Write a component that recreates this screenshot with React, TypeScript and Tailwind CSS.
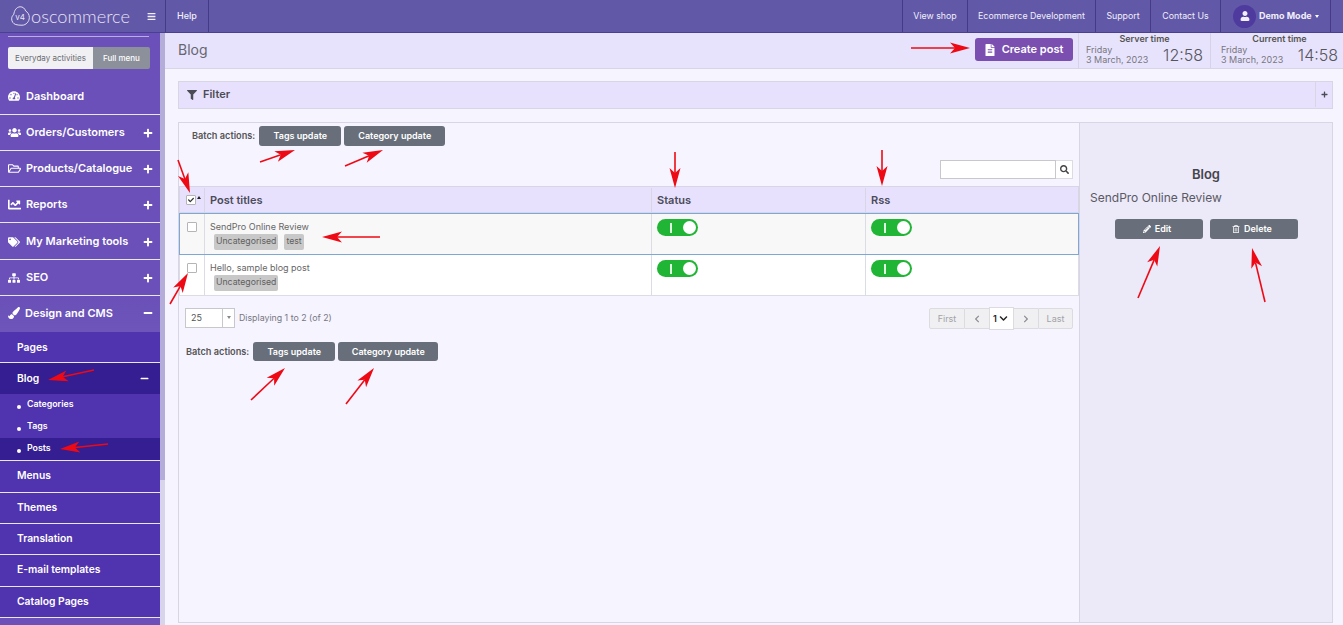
import React from 'react'
import {
  FaChevronDown,
  FaChevronLeft,
  FaChevronRight,
  FaFileAlt,
  FaFilter,
  FaPaintBrush,
  FaPencilAlt,
  FaPlus,
  FaRegFolderOpen,
  FaRegTrashAlt,
  FaSearch,
  FaSitemap,
  FaTachometerAlt,
  FaTags,
  FaUser,
  FaUsers,
  FaBars,
  FaMinus,
  FaCheck,
  FaChartLine,
} from 'react-icons/fa'

const arrows = [
  [911, 48, 970, 48],
  [260, 162, 295, 150],
  [345, 166, 383, 150],
  [178, 160, 190, 193],
  [675, 152, 675, 188],
  [882, 150, 882, 186],
  [380, 237, 322, 237],
  [170, 304, 188, 273],
  [1138, 298, 1160, 246],
  [1265, 302, 1252, 248],
  [251, 400, 285, 368],
  [346, 404, 374, 368],
  [94, 370, 48, 380],
  [108, 444, 60, 449],
]

function Arrows() {
  return (
    <svg className="absolute left-0 top-0 pointer-events-none" width="1343" height="625">
      {arrows.map(([x1, y1, x2, y2], i) => {
        const len = Math.hypot(x2 - x1, y2 - y1)
        const ux = (x2 - x1) / len
        const uy = (y2 - y1) / len
        const px = -uy
        const py = ux
        const bx = x2 - ux * 20
        const by = y2 - uy * 20
        const nx = x2 - ux * 15
        const ny = y2 - uy * 15
        const head = `${x2},${y2} ${bx + px * 5.5},${by + py * 5.5} ${nx},${ny} ${bx - px * 5.5},${by - py * 5.5}`
        return (
          <g key={i}>
            <line x1={x1} y1={y1} x2={nx} y2={ny} stroke="#ee0a14" strokeWidth="1.6" />
            <polygon points={head} fill="#ee0a14" />
          </g>
        )
      })}
    </svg>
  )
}

function Logo() {
  return (
    <div className="flex items-center w-[147px] pl-[11px] gap-[1px] shrink-0">
      <svg width="19" height="22" viewBox="0 0 20 23" fill="none" stroke="#e9e6f6" strokeWidth="1">
        <path d="M5 20.500c-2.600-.8-4.300-3.200-4.300-6 0-2.100.9-3.600 2.300-4.700C3.300 5.600 5.900 2 9.500 1.800c3-.2 5.100 1.900 5.900 4.400 2.400 1.400 3.900 3.900 3.900 6.800 0 4.300-3.400 8.200-7.700 8.200-2.300 0-4.500-.1-6.600-.7z" />
        <text x="4.500" y="16" fontSize="8.500" fill="#e9e6f6" stroke="none" fontFamily="Inter, sans-serif">v4</text>
      </svg>
      <span className="text-[18.200px] font-light leading-none text-[#e6e3f3] font-['Lato',sans-serif]">oscommerce</span>
    </div>
  )
}

function TopLink({ label, width }: { label: string; width: string }) {
  return (
    <div className={`${width} flex items-center justify-center border-l border-[#443a86] text-[8.8px] text-[#f1effa]`}>
      {label}
    </div>
  )
}

function TopBar() {
  return (
    <div className="h-[33px] flex bg-[#6258a8] border-b border-[#4a4092]">
      <Logo />
      <div className="w-[18px] flex items-center text-[#f1effa]">
        <FaBars size={9} />
      </div>
      <div className="w-[44px] flex items-center justify-center border-l border-r border-[#443a86] text-[9px] font-medium text-[#f1effa]">
        Help
      </div>
      <div className="flex-1" />
      <TopLink label="View shop" width="w-[65px]" />
      <TopLink label="Ecommerce Development" width="w-[128px]" />
      <TopLink label="Support" width="w-[55px]" />
      <TopLink label="Contact Us" width="w-[70px]" />
      <div className="w-[111px] flex items-center gap-[3px] pl-[12px] border-l border-r border-[#443a86] text-[9px] font-bold text-[#f1effa]">
        <div className="w-[23px] h-[23px] rounded-full bg-[#4f3a9e] flex items-center justify-center">
          <FaUser size={10} />
        </div>
        <span>Demo Mode</span>
        <span className="border-x-[2.500px] border-x-transparent border-t-[3px] border-t-white" />
      </div>
      <div className="w-[12px]" />
    </div>
  )
}

function MainItem({ icon, label, h, sign = 'plus' }: { icon: React.ReactNode; label: string; h: string; sign?: 'plus' | 'minus' | 'none' }) {
  return (
    <div className={`${h} flex items-center border-b border-[#e9e6f6] pl-[8px] pr-[7px] text-[11px] font-semibold text-white`}>
      <span className="w-[18px] flex items-center">{icon}</span>
      <span className="flex-1">{label}</span>
      {sign === 'plus' && <FaPlus size={10} />}
      {sign === 'minus' && <FaMinus size={10} />}
    </div>
  )
}

function SubItem({ label, h }: { label: string; h: string }) {
  return (
    <div className={`${h} flex items-center bg-[#5033ae] border-b border-[#e9e6f6] pl-[17px] text-[10.300px] font-semibold text-white`}>
      {label}
    </div>
  )
}

function ThirdItem({ label, active }: { label: string; active?: boolean }) {
  return (
    <div className={`h-[22px] flex items-center gap-[6px] pl-[17px] text-[8.800px] font-semibold text-white ${active ? 'bg-[#351d92]' : ''}`}>
      <span className="w-[4px] h-[4px] mt-[3px] rounded-full bg-white" />
      <span className="mb-[3px]">{label}</span>
    </div>
  )
}

function Sidebar() {
  return (
    <div className="w-[160px] shrink-0 h-[592px] overflow-hidden bg-[#6a50b8] flex flex-col">
      <div className="h-[3px] shrink-0" />
      <div className="mx-[8px] w-[141px] h-[1px] shrink-0 bg-[#b9aee0]" />
      <div className="mt-[10px] ml-[8px] w-[142px] h-[22px] shrink-0 flex text-[8px] rounded-[2px] overflow-hidden">
        <div className="w-[85px] bg-[#f1f1f3] text-[#6a6a72] flex items-center justify-center">Everyday activities</div>
        <div className="flex-1 bg-[#8b909a] text-white font-medium flex items-center justify-center">Full menu</div>
      </div>
      <MainItem icon={<FaTachometerAlt size={12} />} label="Dashboard" h="h-[46px] pt-[9px] shrink-0" sign="none" />
      <MainItem icon={<FaUsers size={13} />} label="Orders/Customers" h="h-[36px] shrink-0" />
      <MainItem icon={<FaRegFolderOpen size={13} />} label="Products/Catalogue" h="h-[36px] shrink-0" />
      <MainItem icon={<FaChartLine size={13} />} label="Reports" h="h-[36px] shrink-0" />
      <MainItem icon={<FaTags size={12} />} label="My Marketing tools" h="h-[37px] pt-[1px] shrink-0" />
      <MainItem icon={<FaSitemap size={12} />} label="SEO" h="h-[36px] shrink-0" />
      <div className="bg-gradient-to-b from-[#6a50b8] to-[#6d55ba] shrink-0">
        <div className="h-[36px] pb-[2px] flex items-center pl-[8px] pr-[7px] text-[11px] font-semibold text-white">
          <span className="w-[17px] flex items-center"><FaPaintBrush size={12} /></span>
          <span className="flex-1">Design and CMS</span>
          <FaMinus size={10} />
        </div>
      </div>
      <SubItem label="Pages" h="h-[31px] pt-[1px] shrink-0" />
      <div className="h-[31px] shrink-0 flex items-center bg-[#351d92] pl-[17px] pr-[11px] text-[10.300px] font-semibold text-white">
        <span className="flex-1">Blog</span>
        <FaMinus size={9} />
      </div>
      <div className="bg-[#5033ae] border-b border-[#e9e6f6] shrink-0">
        <ThirdItem label="Categories" />
        <ThirdItem label="Tags" />
        <ThirdItem label="Posts" active />
      </div>
      <SubItem label="Menus" h="h-[32px] pb-[1px] shrink-0" />
      <SubItem label="Themes" h="h-[31px] shrink-0" />
      <SubItem label="Translation" h="h-[31px] shrink-0" />
      <SubItem label="E-mail templates" h="h-[32px] pb-[1px] shrink-0" />
      <SubItem label="Catalog Pages" h="h-[31px] shrink-0" />
    </div>
  )
}

function GrayButton({ children, width, h = 'h-[20px]' }: { children: React.ReactNode; width: string; h?: string }) {
  return (
    <div className={`${width} ${h} flex items-center justify-center gap-[4px] rounded-[3px] bg-[#686f7a] text-[9px] font-semibold text-white`}>
      {children}
    </div>
  )
}

function Check({ checked }: { checked?: boolean }) {
  return (
    <span className="w-[10px] h-[10px] flex items-center justify-center rounded-[1px] border border-[#b5b5b8] bg-white text-[#333]">
      {checked && <FaCheck size={6} />}
    </span>
  )
}

function Toggle() {
  return (
    <div className="w-[41px] h-[17px] rounded-full bg-[#21b535] flex items-center justify-between pl-[13px] pr-[2px]">
      <span className="w-[1.500px] h-[10px] bg-[#dff5e2]" />
      <span className="w-[13px] h-[13px] rounded-full bg-white" />
    </div>
  )
}

function Tag({ label }: { label: string }) {
  return <span className="h-[16px] px-[2px] rounded-[2px] bg-[#c8c8c8] flex items-center text-[8.700px] text-[#5f5f5f]">{label}</span>
}

function Row({ title, tags, active }: { title: string; tags: string[]; active?: boolean }) {
  return (
    <div className={`flex ${active ? 'h-[42px] bg-[#f8f8f8] border border-[#7da7d4]' : 'h-[41px] bg-white border-x border-b border-[#dcdce4]'}`}>
      <div className="w-[25px] border-r border-[#dcdce4] flex justify-center pt-[8px]">
        <Check />
      </div>
      <div className="w-[447px] border-r border-[#dcdce4] pl-[5px] pt-[6px]">
        <div className="text-[9px] leading-[13px] text-[#666]">{title}</div>
        <div className="flex gap-[6px] ml-[4px] mt-[1px]">
          {tags.map((t) => (
            <Tag key={t} label={t} />
          ))}
        </div>
      </div>
      <div className="w-[214px] border-r border-[#dcdce4] pl-[5px] pt-[5px]">
        <Toggle />
      </div>
      <div className="flex-1 pl-[5px] pt-[5px]">
        <Toggle />
      </div>
    </div>
  )
}

function BlogTable() {
  return (
    <div className="text-[#4b4b5a]">
      <div className="h-[27px] pt-[1px] flex bg-[#e7e1fd] border-t border-x border-b border-[#d8d6e4] text-[11px] font-semibold">
        <div className="w-[25px] border-r border-[#d8d6e4] flex items-center justify-center gap-[1px] pl-[3px]">
          <Check checked />
          <span className="mb-[6px] border-x-[2px] border-x-transparent border-b-[3px] border-b-[#222]" />
        </div>
        <div className="w-[447px] border-r border-[#d8d6e4] pl-[5px] flex items-center">Post titles</div>
        <div className="w-[214px] border-r border-[#d8d6e4] pl-[5px] flex items-center">Status</div>
        <div className="flex-1 pl-[5px] flex items-center">Rss</div>
      </div>
      <Row title="SendPro Online Review" tags={['Uncategorised', 'test']} active />
      <Row title="Hello, sample blog post" tags={['Uncategorised']} />
    </div>
  )
}

function Pager() {
  return (
    <div className="flex items-center text-[9px] text-[#a2a2a8]">
      <div className="w-[36px] h-[21px] flex items-center justify-center rounded-l-[2px] border border-[#dcdce0] bg-[#f0f0f2]">First</div>
      <div className="w-[24px] h-[21px] flex items-center justify-center border-y border-[#dcdce0] bg-[#f0f0f2] text-[#8c8c92]"><FaChevronLeft size={8} /></div>
      <div className="w-[25px] h-[23px] flex items-center gap-[2px] pl-[3px] border border-[#dcdce0] bg-white text-[#222] font-semibold">
        1<FaChevronDown size={9} />
      </div>
      <div className="w-[24px] h-[21px] flex items-center justify-center border-y border-[#dcdce0] bg-[#f0f0f2] text-[#8c8c92]"><FaChevronRight size={8} /></div>
      <div className="w-[35px] h-[21px] flex items-center justify-center rounded-r-[2px] border border-[#dcdce0] bg-[#f0f0f2]">Last</div>
    </div>
  )
}

function TimeBlock({ title, time, box }: { title: string; time: string; box: string }) {
  return (
    <div className={`${box} border-l border-[#d6d3e6] flex flex-col`}>
      <div className="text-[9px] font-semibold leading-[10px] mt-[1px] text-center text-[#555]">{title}</div>
      <div className="flex items-center justify-between mt-[1px]">
        <div className="text-[9px] leading-[10px] text-[#77777f]">
          Friday
          <br />
          3 March, 2023
        </div>
        <div className="text-[16px] font-light leading-[20px] text-[#55555c]">{time}</div>
      </div>
    </div>
  )
}

function Content() {
  return (
    <div className="flex-1 min-w-0 bg-[#f6f4ff] h-[592px] flex flex-col">
      <div className="h-[36px] flex items-center bg-[#e8e3fc] border-b border-[#d8d6e4] pl-[13px]">
        <div className="flex-1 text-[14px] text-[#666670] pb-[2px]">Blog</div>
        <div className="w-[98px] h-[23px] mr-[5px] mb-[2px] pr-[1px] rounded-[3px] bg-[#7a4fb0] flex items-center justify-center gap-[6px] text-[11px] font-semibold text-white">
          <FaFileAlt size={12} />
          Create post
        </div>
        <div className="flex h-full">
          <TimeBlock title="Server time" time="12:58" box="w-[132px] pl-[7px] pr-[7px]" />
          <TimeBlock title="Current time" time="14:58" box="w-[133px] pl-[10px] pr-[5px]" />
        </div>
      </div>

      <div className="ml-[13px] w-[1155px] mt-[12px] h-[28px] pb-[1px] flex items-center bg-[#e7e1fd] border border-[#d8d6e4] text-[11px] font-semibold text-[#4b4b55]">
        <span className="pl-[8px] pr-[6px]"><FaFilter size={10} /></span>
        <span className="flex-1">Filter</span>
        <span className="w-[17px] h-full border-l border-[#d8d6e4] flex items-center justify-center"><FaPlus size={7} /></span>
      </div>

      <div className="ml-[13px] w-[1155px] mt-[13px] h-[501px] flex border border-[#d8d6e4]">
        <div className="w-[901px] border-r border-[#d8d6e4] flex flex-col">
          <div className="flex items-center gap-[3px] pl-[13px] mt-[3px] text-[9.200px] font-semibold text-[#555]">
            <span className="mr-[1px]">Batch actions:</span>
            <GrayButton width="w-[82px]">Tags update</GrayButton>
            <GrayButton width="w-[101px]">Category update</GrayButton>
          </div>
          <div className="flex justify-end pr-[6px] mt-[14px] mb-[7px]">
            <div className="w-[116px] h-[19px] bg-white border border-[#c8c8cc]" />
            <div className="w-[17px] h-[19px] bg-white border-y border-r border-[#dcdce0] flex items-center justify-center text-[#444]">
              <FaSearch size={9} />
            </div>
          </div>
          <BlogTable />
          <div className="flex items-center justify-between pl-[6px] pr-[6px] mt-[11px]">
            <div className="flex items-center gap-[4px] mb-[2px] text-[8.800px] text-[#77777f]">
              <div className="w-[50px] h-[20px] flex bg-white border border-[#c8c8cc] text-[9px] text-[#555]">
                <span className="flex-1 pl-[5px] flex items-center">25</span>
                <span className="w-[12px] border-l border-[#c8c8cc] flex items-center justify-center">
                  <span className="border-x-[2px] border-x-transparent border-t-[3px] border-t-[#888]" />
                </span>
              </div>
              Displaying 1 to 2 (of 2)
            </div>
            <Pager />
          </div>
          <div className="flex items-center gap-[3px] pl-[7px] mt-[12px] text-[9.200px] font-semibold text-[#555]">
            <span className="mr-[1px]">Batch actions:</span>
            <GrayButton width="w-[82px]" h="h-[19px]">Tags update</GrayButton>
            <GrayButton width="w-[100px]" h="h-[19px]">Category update</GrayButton>
          </div>
        </div>
        <div className="flex-1 bg-[#ece9f8] pl-[10px] pt-[43px]">
          <div className="text-[13px] font-semibold text-center text-[#44444c] pr-[10px] leading-[16px]">Blog</div>
          <div className="text-[12px] text-[#5a5a64] mt-[8px] leading-[15px]">SendPro Online Review</div>
          <div className="flex gap-[7px] ml-[25px] mt-[14px]">
            <GrayButton width="w-[88px] pr-[4px]"><FaPencilAlt size={8} />Edit</GrayButton>
            <GrayButton width="w-[88px] pr-[4px]"><FaRegTrashAlt size={8} />Delete</GrayButton>
          </div>
        </div>
      </div>
    </div>
  )
}

export default function App() {
  return (
    <div className="relative w-[1343px] h-[625px] overflow-hidden bg-[#f6f4ff] font-['Inter',sans-serif]">
      <TopBar />
      <div className="flex">
        <Sidebar />
        <div className="w-[5px] shrink-0 h-[592px] flex flex-col">
          <div className="h-[447px] bg-[#b4acd9]" />
          <div className="flex-1 bg-[#d8d4ec]" />
        </div>
        <Content />
      </div>
      <Arrows />
    </div>
  )
}
